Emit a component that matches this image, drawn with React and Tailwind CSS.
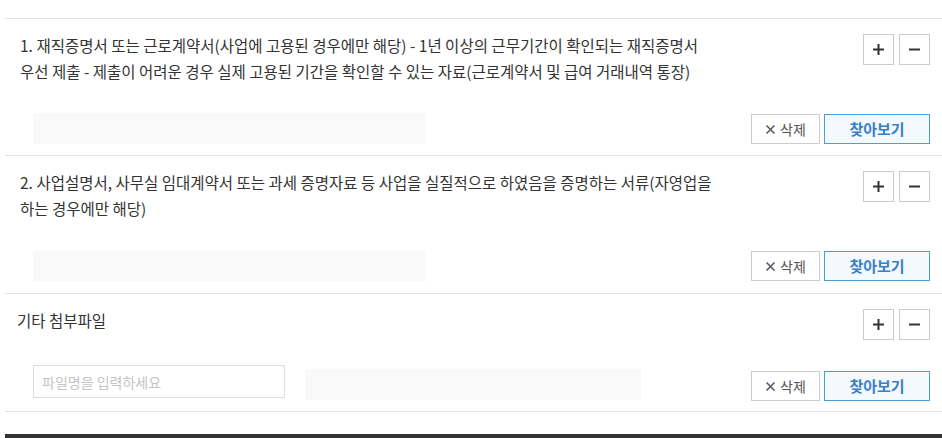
import React from 'react';

const font = { fontFamily: '"Noto Sans CJK KR", "Noto Sans", sans-serif' };

function PlusMinus() {
    return (
        <div className="flex gap-[5px] shrink-0">
            <button className="w-[31px] h-[31px] border border-[#cccccc] bg-white flex items-center justify-center text-[#333]">
                <svg width="13" height="13" viewBox="0 0 13 13"><path d="M6.5 1v11M1 6.5h11" stroke="#333" strokeWidth="2" /></svg>
            </button>
            <button className="w-[31px] h-[31px] border border-[#cccccc] bg-white flex items-center justify-center text-[#333]">
                <svg width="13" height="13" viewBox="0 0 13 13"><path d="M1 6.5h11" stroke="#333" strokeWidth="2" /></svg>
            </button>
        </div>
    );
}

function FileButtons({ offset }) {
    return (
        <div className={`flex gap-[4px] shrink-0 ${offset}`}>
            <button className="w-[69px] h-[30px] border border-[#cccccc] bg-white text-[14px] text-[#555] flex items-center justify-center gap-[4px]">
                <svg width="11" height="11" viewBox="0 0 11 11"><path d="M1.5 1.5l8 8M9.5 1.5l-8 8" stroke="#555" strokeWidth="1.5" /></svg>
                삭제
            </button>
            <button className="w-[106px] h-[30px] border border-[#4a9fd8] bg-[#f3f9ff] text-[15px] font-semibold text-[#3a7fc4] flex items-center justify-center">
                찾아보기
            </button>
        </div>
    );
}

function Section({ children, withInput, bottom = 'pb-[11px]' }) {
    return (
        <div className="border-b border-[#e2e2e2]">
            <div className="flex justify-between pl-[15px] pr-[12px] pt-[15px]">
                <div className="-mt-[2px] text-[15.5px] leading-[26px] text-[#333]">{children}</div>
                <PlusMinus />
            </div>
            {withInput ? (
                <div className="flex items-start justify-between pl-[28px] pr-[12px] mt-[25px] pb-[10px]">
                    <div className="flex items-start gap-[20px]">
                        <input
                            placeholder="파일명을 입력하세요"
                            className="w-[252px] h-[33px] border border-[#dddddd] px-[8px] text-[14px] placeholder:text-[#c4c4c4] outline-none"
                            style={font}
                        />
                        <div className="w-[336px] h-[31px] bg-[#f9f9f9] mt-[4px]" />
                    </div>
                    <FileButtons offset="mt-[6px]" />
                </div>
            ) : (
                <div className={`flex items-start justify-between pl-[28px] pr-[12px] mt-[29px] ${bottom}`}>
                    <div className="w-[393px] h-[31px] bg-[#f9f9f9]" />
                    <FileButtons offset="mt-[1px]" />
                </div>
            )}
        </div>
    );
}

export default function App() {
    return (
        <div className="w-[942px] h-[438px] bg-white overflow-hidden" style={font}>
            <div className="ml-[5px] mt-[18px] border-t border-[#e2e2e2]">
                <Section>
                    1. 재직증명서 또는 근로계약서(사업에 고용된 경우에만 해당) - 1년 이상의 근무기간이 확인되는 재직증명서
                    <br />
                    우선 제출 - 제출이 어려운 경우 실제 고용된 기간을 확인할 수 있는 자료(근로계약서 및 급여 거래내역 통장)
                </Section>
                <Section bottom="pb-[12px]">
                    2. 사업설명서, 사무실 임대계약서 또는 과세 증명자료 등 사업을 실질적으로 하였음을 증명하는 서류(자영업을
                    <br />
                    하는 경우에만 해당)
                </Section>
                <Section withInput>
                    <span className="-ml-[3px]">기타 첨부파일</span>
                </Section>
                <div className="mt-[22px] h-[4px] bg-[#333333]" />
            </div>
        </div>
    );
}
